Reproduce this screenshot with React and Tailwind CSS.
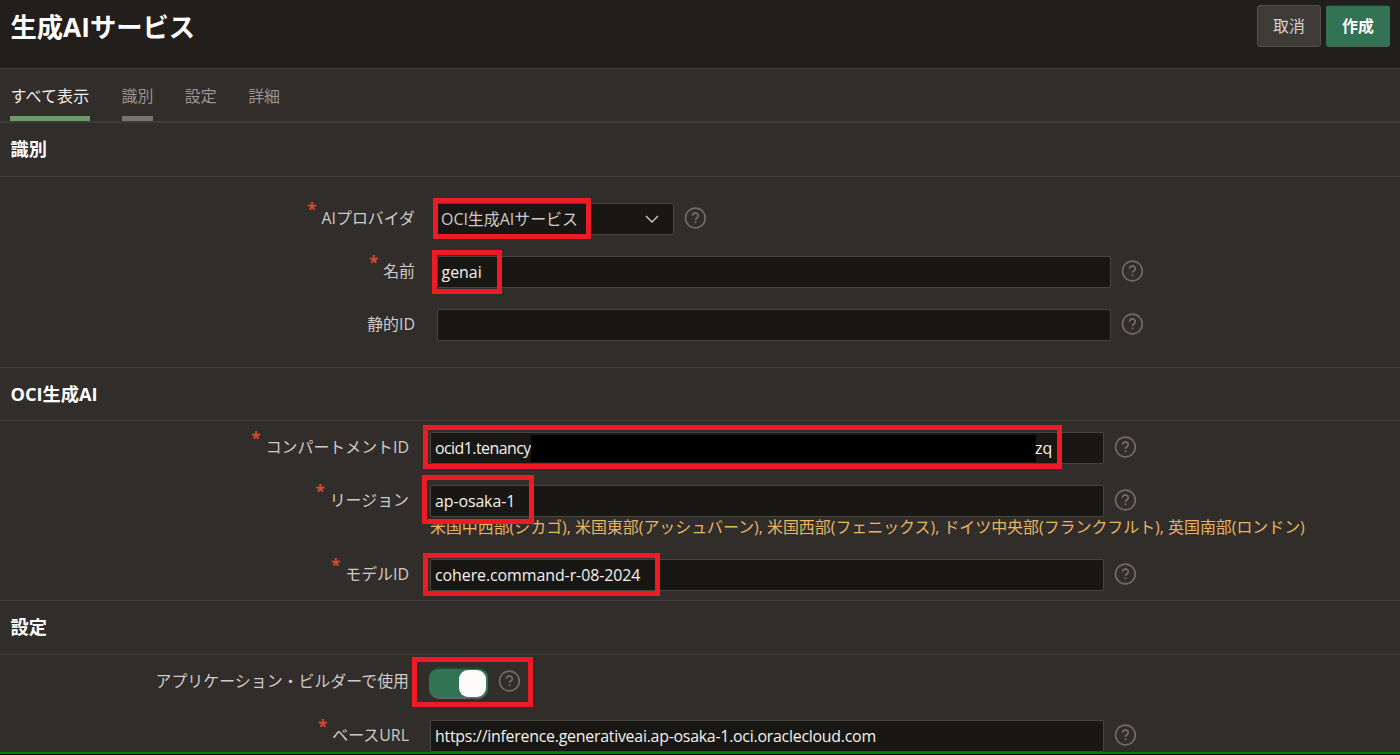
import React from 'react'

function HelpIcon() {
  return (
    <svg width="22" height="22" viewBox="0 0 22 22" fill="none" className="shrink-0 -mt-[2px]">
      <circle cx="11.4" cy="11" r="9.9" stroke="#6f6a66" strokeWidth="1.7" />
      <path d="M8.5 8.7a2.9 2.7 0 1 1 4.6 2.1c-1 .6-1.6 1-1.6 2" stroke="#77726e" strokeWidth="1.6" />
      <circle cx="11.5" cy="15.3" r="1" fill="#77726e" />
    </svg>
  )
}

function Label({ required, className = 'w-[409px] mr-[21px]', children }) {
  return (
    <div className={`flex justify-end shrink-0 h-8 items-center pb-[2px] text-[#cfcbc7] ${className}`}>
      {required && <span className="text-[#d9482f] text-[17px] leading-none font-bold mr-[5px] -mt-[18px]">*</span>}
      <span className="whitespace-nowrap">{children}</span>
    </div>
  )
}

function Input({ className = 'w-[674px] pl-1 text-[#f5f2ee]', children }) {
  return (
    <div className={`flex items-center h-8 shrink-0 mr-2.5 border border-[#474441] rounded-[2px] bg-[#191714] font-medium whitespace-nowrap ${className}`}>
      {children}
    </div>
  )
}

function SectionTitle({ className = 'h-[54px] pb-[2px]', children }) {
  return (
    <h2 className={`flex items-center pl-[10.5px] border-b border-[#3d3a37] text-[18.2px] font-bold text-white ${className}`}>
      {children}
    </h2>
  )
}

export default function App() {
  return (
    <div className="relative w-[1400px] h-[755px] overflow-hidden bg-[#312d2a] text-[15.93px] leading-6 font-['Open_Sans','Noto_Sans_CJK_JP',sans-serif]">
      <header className="h-[69px] flex items-start justify-between bg-[#221e1b] border-b border-[#3d3a37] pl-[10.5px] pr-[10px]">
        <h1 className="text-[26.3px] leading-[54px] font-bold text-white">生成AIサービス</h1>
        <div className="flex gap-[5px] pt-[5px]">
          <button className="w-16 h-[42px] rounded-[3px] border border-[#54504c] bg-[#3e3a36] text-[#d5d1cd]">取消</button>
          <button className="w-16 h-[42px] rounded-[3px] border border-t-[#14412b] border-x-[#317353] border-b-[#59604f] bg-[#317353] text-white font-bold">作成</button>
        </div>
      </header>

      <nav className="h-[54px] flex gap-[31.5px] pl-[10px] border-b-2 border-[#3d3a37] text-[#9a9591]">
        <span className="w-[80px] border-b-[5px] border-[#6b9a6d] text-[#f2efec] leading-[54px] tracking-[0.2px] pl-[0.5px] whitespace-nowrap">すべて表示</span>
        <span className="border-b-[5px] border-[#787371] leading-[54px]">識別</span>
        <span className="leading-[54px]">設定</span>
        <span className="leading-[54px]">詳細</span>
      </nav>

      <section className="h-[244px]">
        <SectionTitle>識別</SectionTitle>
        <div className="flex flex-col gap-[21px] pt-[26px]">
          <div className="flex items-center">
            <Label required className="w-[415px] mr-[22px]">AIプロバイダ</Label>
            <Input className="w-[237px] pl-[3px] justify-between text-[#cfcbc7]">
              <span className="font-normal">OCI生成AIサービス</span>
              <svg width="14" height="8" viewBox="0 0 14 8" fill="none" stroke="#cfcbc7" strokeWidth="1.4" className="mr-[14px]">
                <path d="M1 1l6 6 6-6" />
              </svg>
            </Input>
            <HelpIcon />
          </div>
          <div className="flex items-center">
            <Label required className="w-[415px] mr-[22px]">名前</Label>
            <Input><span className="-ml-[0.5px]">genai</span></Input>
            <HelpIcon />
          </div>
          <div className="flex items-center">
            <Label className="w-[415px] mr-[22px]">静的ID</Label>
            <Input />
            <HelpIcon />
          </div>
        </div>
      </section>

      <section className="h-[233px] border-t border-[#3d3a37]">
        <SectionTitle className="h-[53px]">OCI生成AI</SectionTitle>
        <div className="flex flex-col pt-[11px]">
          <div className="flex items-center">
            <Label required>コンパートメントID</Label>
            <Input>
              <span className="w-24 shrink-0 tracking-[-0.55px]">ocid1.tenancy</span>
              <span className="w-[505px] h-[27px] bg-black shrink-0" />
              <span className="-ml-px">zq</span>
            </Input>
            <HelpIcon />
          </div>
          <div className="flex items-center mt-[21px]">
            <Label required>リージョン</Label>
            <Input><span className="tracking-[-0.1px]">ap-osaka-1</span></Input>
            <HelpIcon />
          </div>
          <p className="h-[42px] pl-[430px] leading-[20px] text-[#e9b562] whitespace-nowrap">
            米国中西部(シカゴ), 米国東部(アッシュバーン), 米国西部(フェニックス), ドイツ中央部(フランクフルト), 英国南部(ロンドン)
          </p>
          <div className="flex items-center">
            <Label required>モデルID</Label>
            <Input><span className="tracking-[-0.07px]">cohere.command-r-08-2024</span></Input>
            <HelpIcon />
          </div>
        </div>
      </section>

      <section className="h-[152px] border-t border-[#3d3a37]">
        <SectionTitle>設定</SectionTitle>
        <div className="flex flex-col gap-[21px] pt-[12px]">
          <div className="flex items-center">
            <Label className="w-[409px] mr-[20px] pb-[5px]">アプリケーション・ビルダーで使用</Label>
            <div className="flex items-center justify-end w-[59px] h-8 mr-[10px] pr-[2px] rounded-[10px] bg-[#317353] border-t-2 border-b-2 border-t-[#18492f] border-b-[#66635e]">
              <div className="w-[27px] h-[27px] rounded-[9px] bg-[#fcfbfa]" />
            </div>
            <div className="-mt-[2px]"><HelpIcon /></div>
          </div>
          <div className="flex items-center">
            <Label required>ベースURL</Label>
            <Input><span className="tracking-[-0.26px]">https://inference.generativeai.ap-osaka-1.oci.oraclecloud.com</span></Input>
            <HelpIcon />
          </div>
        </div>
      </section>
      <footer className="h-[3px] bg-black border-t-2 border-[#008400]" />

      {/* Destaques */}
      <div className="absolute left-[433px] top-[198px] w-[158px] h-[41px] border-5 border-[#ed1c24]" />
      <div className="absolute left-[432px] top-[250px] w-[70px] h-[44px] border-5 border-[#ed1c24]" />
      <div className="absolute left-[423px] top-[425px] w-[639px] h-[44px] border-5 border-[#ed1c24]" />
      <div className="absolute left-[422px] top-[475px] w-[112px] h-[49px] border-5 border-[#ed1c24]" />
      <div className="absolute left-[423px] top-[553px] w-[237px] h-[43px] border-5 border-[#ed1c24]" />
      <div className="absolute left-[412px] top-[657px] w-[121px] h-[50px] border-5 border-[#ed1c24]" />
    </div>
  )
}
